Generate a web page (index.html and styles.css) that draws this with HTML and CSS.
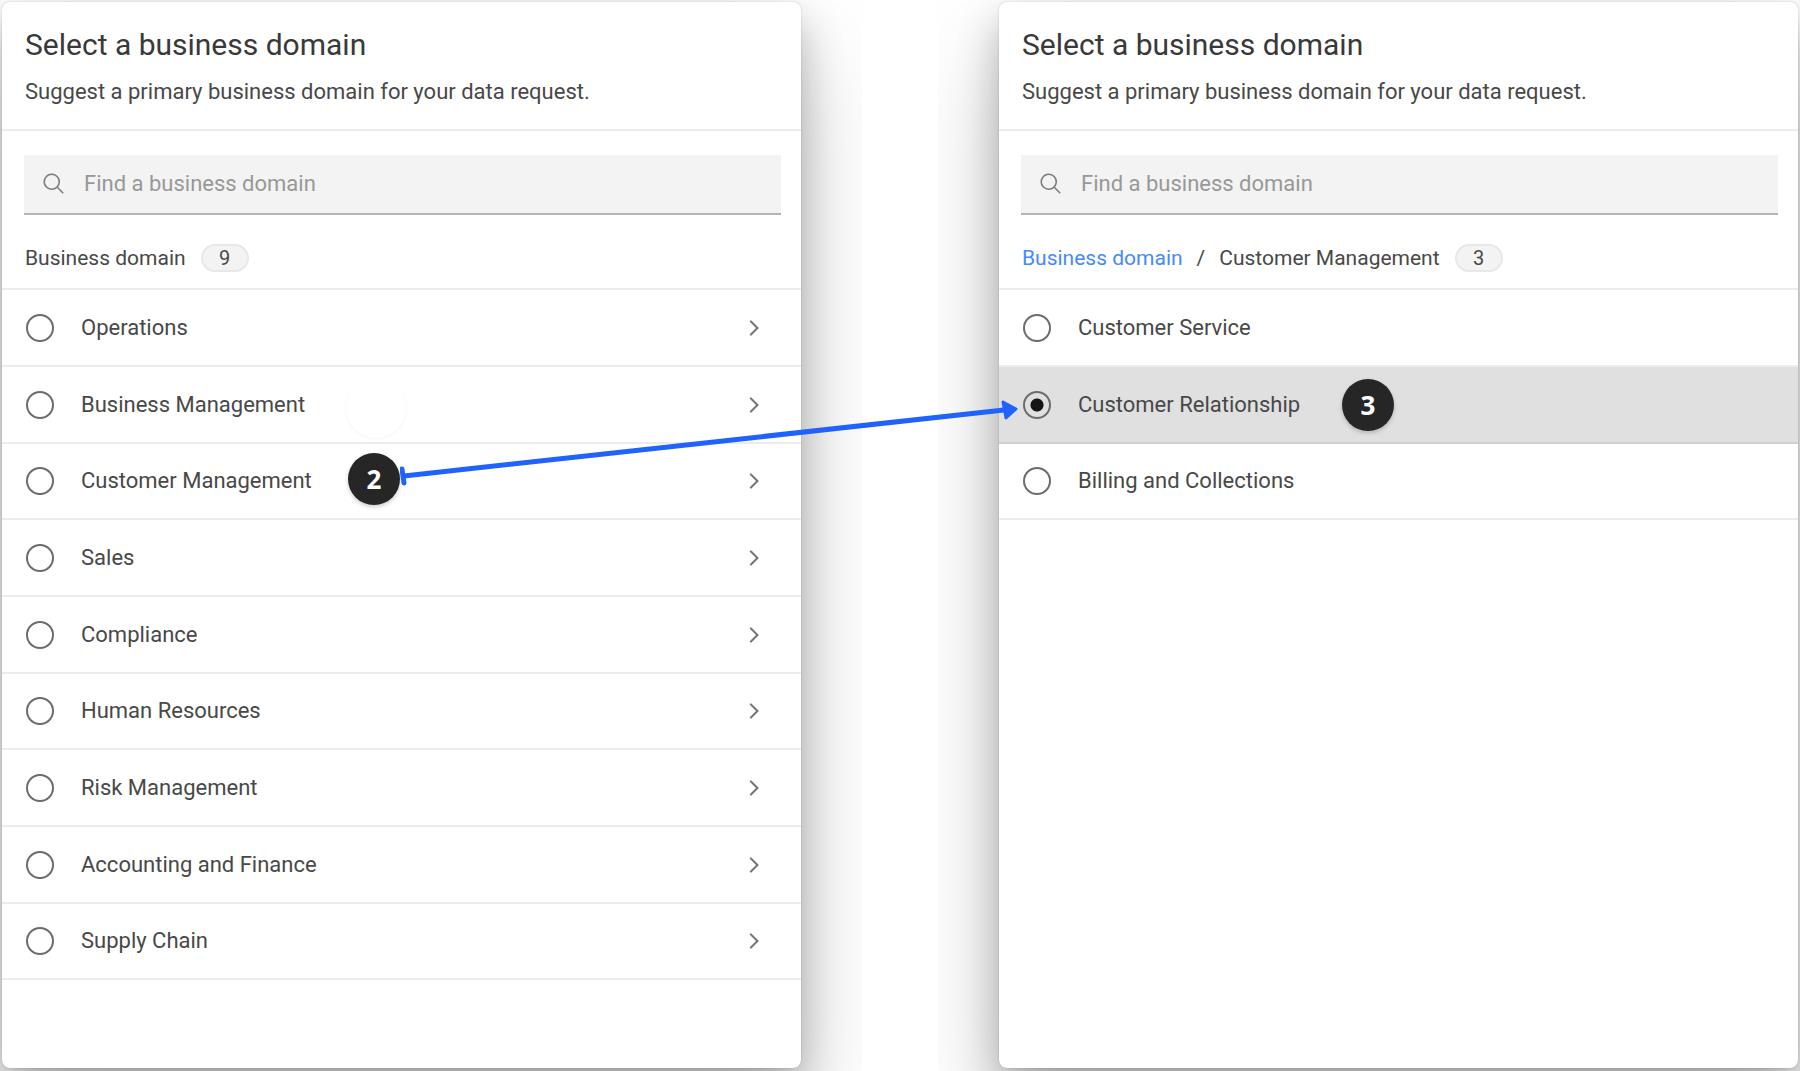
FILE: index.html
```html
<!DOCTYPE html>
<html lang="en">
<head>
<meta charset="utf-8">
<meta name="viewport" content="width=device-width, initial-scale=1">
<title>Select a business domain</title>
<link rel="stylesheet" href="styles.css">
</head>
<body>
<svg class="symbols" aria-hidden="true">
  <symbol id="search" viewBox="0 0 32 32"><path d="M29 27.586l-7.552-7.552a11.018 11.018 0 1 0-1.414 1.414L27.586 29ZM4 13a9 9 0 1 1 9 9 9.01 9.01 0 0 1-9-9Z"/></symbol>
  <symbol id="chevron" viewBox="0 0 16 16"><path d="M11 8L6 13 5.300 12.300 9.600 8 5.300 3.700 6 3z"/></symbol>
</svg>
<main class="stage">
  <div class="column column-start">
    <section class="panel">
      <header class="panel-header">
        <h1 class="title">Select a business domain</h1>
        <p class="subtitle">Suggest a primary business domain for your data request.</p>
      </header>
      <div class="toolbar">
        <label class="search"><svg class="search-icon" aria-hidden="true"><use href="#search"/></svg><input class="search-input" type="text" placeholder="Find a business domain" aria-label="Find a business domain"></label>
        <div class="crumbs"><span>Business domain</span><span class="count">9</span></div>
      </div>
      <ul class="list">
        <li class="row"><label class="option"><input class="radio" type="radio" name="domain"><span>Operations</span></label><button class="open" type="button" aria-label="Open Operations"><svg class="chevron"><use href="#chevron"/></svg></button></li>
        <li class="row"><label class="option"><input class="radio" type="radio" name="domain"><span>Business Management</span></label><span class="ghost"></span><button class="open" type="button" aria-label="Open Business Management"><svg class="chevron"><use href="#chevron"/></svg></button></li>
        <li class="row"><label class="option"><input class="radio" type="radio" name="domain"><span>Customer Management</span></label><span class="step step-two">2</span><button class="open" type="button" aria-label="Open Customer Management"><svg class="chevron"><use href="#chevron"/></svg></button></li>
        <li class="row"><label class="option"><input class="radio" type="radio" name="domain"><span>Sales</span></label><button class="open" type="button" aria-label="Open Sales"><svg class="chevron"><use href="#chevron"/></svg></button></li>
        <li class="row"><label class="option"><input class="radio" type="radio" name="domain"><span>Compliance</span></label><button class="open" type="button" aria-label="Open Compliance"><svg class="chevron"><use href="#chevron"/></svg></button></li>
        <li class="row"><label class="option"><input class="radio" type="radio" name="domain"><span>Human Resources</span></label><button class="open" type="button" aria-label="Open Human Resources"><svg class="chevron"><use href="#chevron"/></svg></button></li>
        <li class="row"><label class="option"><input class="radio" type="radio" name="domain"><span>Risk Management</span></label><button class="open" type="button" aria-label="Open Risk Management"><svg class="chevron"><use href="#chevron"/></svg></button></li>
        <li class="row"><label class="option"><input class="radio" type="radio" name="domain"><span>Accounting and Finance</span></label><button class="open" type="button" aria-label="Open Accounting and Finance"><svg class="chevron"><use href="#chevron"/></svg></button></li>
        <li class="row"><label class="option"><input class="radio" type="radio" name="domain"><span>Supply Chain</span></label><button class="open" type="button" aria-label="Open Supply Chain"><svg class="chevron"><use href="#chevron"/></svg></button></li>
      </ul>
    </section>
  </div>
  <div class="column column-end">
    <section class="panel">
      <header class="panel-header">
        <h2 class="title">Select a business domain</h2>
        <p class="subtitle">Suggest a primary business domain for your data request.</p>
      </header>
      <div class="toolbar">
        <label class="search"><svg class="search-icon" aria-hidden="true"><use href="#search"/></svg><input class="search-input" type="text" placeholder="Find a business domain" aria-label="Find a business domain"></label>
        <nav class="crumbs"><a class="crumb-link" href="#">Business domain</a><span class="slash">/</span><span>Customer Management</span><span class="count">3</span></nav>
      </div>
      <ul class="list">
        <li class="row"><label class="option"><input class="radio" type="radio" name="subdomain"><span>Customer Service</span></label></li>
        <li class="row row-selected"><label class="option"><input class="radio" type="radio" name="subdomain" checked><span>Customer Relationship</span></label><span class="step step-three">3</span></li>
        <li class="row"><label class="option"><input class="radio" type="radio" name="subdomain"><span>Billing and Collections</span></label></li>
      </ul>
    </section>
  </div>
  <svg class="arrow" viewBox="0 0 618 90" preserveAspectRatio="none" aria-hidden="true">
    <path d="M4 76L604 10" stroke-width="5"/>
    <path d="M2 69L4 83" stroke-width="5" stroke-linecap="round"/>
    <path class="arrow-head" d="M603 2L616 9L606 18Z" stroke-width="3" stroke-linejoin="round"/>
  </svg>
</main>
</body>
</html>
```

FILE: styles.css
```css
* {
  box-sizing: border-box;
}

body {
  margin: 0;
  background: #fff;
  color: #484848;
  font-family: Roboto, "Liberation Sans", sans-serif;
  font-size: 22px;
  line-height: 28px;
}

.symbols {
  display: none;
}

.stage {
  position: relative;
  display: grid;
  grid-template-columns: 1fr 1fr;
  column-gap: 76px;
  min-height: 100vh;
}

.column {
  display: grid;
  overflow: hidden;
  padding: 2px 2px 3px;
}

.column-start {
  padding-right: 61px;
}

.column-end {
  padding-left: 61px;
}

.panel {
  border-radius: 8px;
  background: #fff;
  box-shadow: 0 50px 100px rgba(0, 0, 0, 0.2), 0 20px 40px rgba(0, 0, 0, 0.25), 0 0 2px rgba(0, 0, 0, 0.2);
}

.panel-header {
  padding: 23px 23px 23px;
  border-bottom: 2px solid #ececec;
}

.title {
  margin: 0;
  color: #393939;
  font-size: 30px;
  font-weight: 400;
  line-height: 40px;
}

.subtitle {
  margin: 13px 0 0;
}

.toolbar {
  padding: 24px 20px 0 22px;
}

.search {
  display: flex;
  align-items: center;
  gap: 18px;
  height: 60px;
  padding: 0 18px;
  border-bottom: 2px solid #b4b4b4;
  background: #f3f3f3;
}

.search-icon {
  flex: none;
  width: 24px;
  height: 24px;
  fill: #7c7c7c;
}

.search-input {
  flex: 1;
  min-width: 0;
  padding: 0;
  border: 0;
  outline: 0;
  background: none;
  color: inherit;
  font: inherit;
}

.search-input::placeholder {
  color: #989898;
  opacity: 1;
}

.crumbs {
  display: flex;
  align-items: center;
  height: 73px;
  padding: 12px 0 0 1px;
  font-size: 21px;
}

.crumb-link {
  color: #4589ff;
  text-decoration: none;
}

.slash {
  margin: 0 14px;
}

.count {
  display: grid;
  place-items: center;
  width: 48px;
  height: 28px;
  margin-left: 15px;
  border: 2px solid #e8e8e8;
  border-radius: 14px;
  background: #f3f3f3;
  font-size: 20px;
  line-height: 24px;
}

.list {
  display: grid;
  grid-auto-rows: 77px 77px 76px;
  margin: 0;
  padding: 0;
  border-top: 2px solid #ececec;
  list-style: none;
}

.row {
  position: relative;
  display: flex;
  align-items: center;
  justify-content: space-between;
  padding: 0 35px 0 24px;
  border-bottom: 2px solid #ececec;
}

.row-selected {
  border-color: #d0d0d0;
  background: #e0e0e0;
}

.option {
  display: flex;
  align-items: center;
  gap: 27px;
}

.radio {
  appearance: none;
  width: 28px;
  height: 28px;
  margin: 0;
  border: 2px solid #6c6c6c;
  border-radius: 50%;
}

.radio:checked {
  background: radial-gradient(circle, #161616 6px, transparent 7px);
}

.open {
  display: grid;
  padding: 0;
  border: 0;
  background: none;
}

.chevron {
  width: 24px;
  height: 24px;
  fill: #6c6c6c;
  stroke: #6c6c6c;
  stroke-width: 0.4;
}

.ghost {
  position: absolute;
  top: 11px;
  left: 344px;
  width: 60px;
  height: 60px;
  border-radius: 50%;
  background: #fff;
  box-shadow: 0 1px 3px rgba(0, 0, 0, 0.05);
}

.step {
  position: absolute;
  display: grid;
  place-items: center;
  width: 52px;
  height: 52px;
  border-radius: 50%;
  background: #262626;
  box-shadow: 0 2px 4px rgba(0, 0, 0, 0.2);
  color: #fff;
  font-family: "Open Sans", sans-serif;
  font-size: 26px;
  font-weight: 700;
}

.step-two {
  top: 9px;
  left: 346px;
}

.step-three {
  top: 12px;
  left: 343px;
}

.arrow {
  position: absolute;
  top: 400px;
  left: 400px;
  width: calc(50% - 282px);
  height: 90px;
  fill: none;
  stroke: #1f62fe;
}

.arrow-head {
  fill: #1f62fe;
}
```
